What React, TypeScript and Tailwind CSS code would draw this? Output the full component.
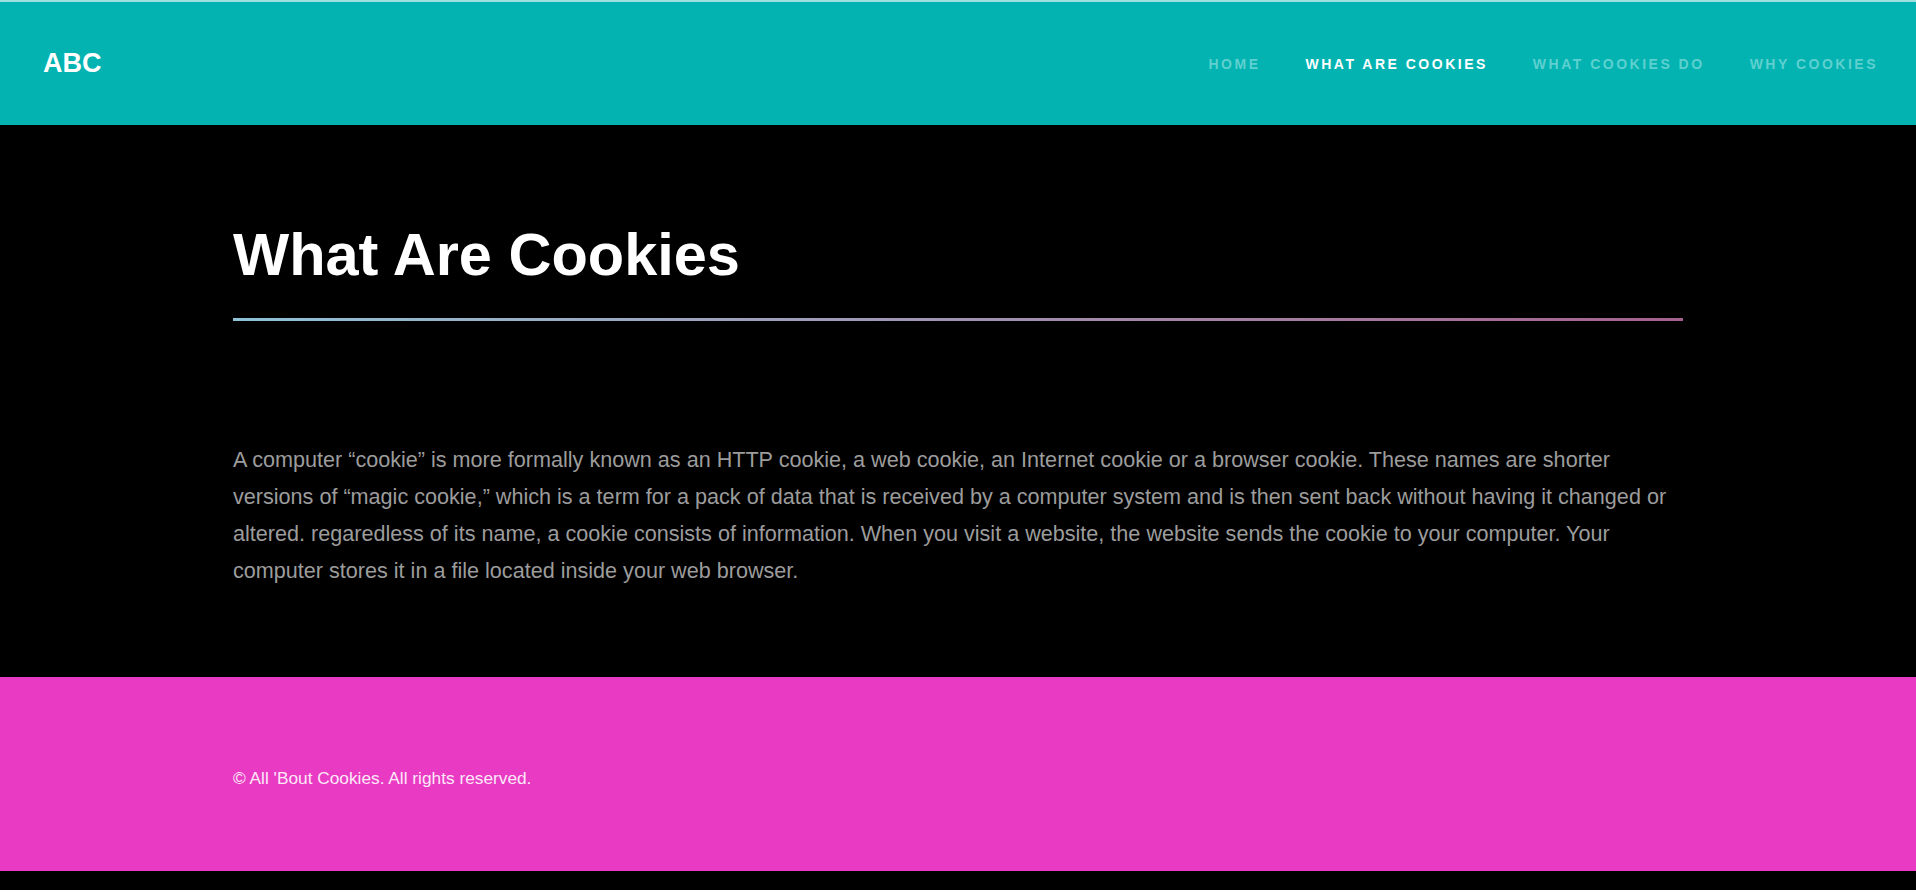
const NAV = [
  { label: 'Home', active: false },
  { label: 'What Are Cookies', active: true },
  { label: 'What Cookies Do', active: false },
  { label: 'Why Cookies', active: false },
];

export default function App() {
  return (
    <div className="font-['Liberation_Sans',Arial,sans-serif]">
      <div className="h-[2px] bg-[#9ee0e0]" />
      <header className="flex h-[123px] items-center justify-between bg-[#02b3b2] pl-[43px] pr-[38px]">
        <a className="text-[27px] font-bold leading-none text-white">ABC</a>
        <nav className="flex items-center gap-[45px]">
          {NAV.map((n) => (
            <a
              key={n.label}
              className={`text-[14px] font-bold uppercase leading-none tracking-[2.5px] ${
                n.active ? 'text-white' : 'text-[#5fd0cf]'
              }`}
            >
              {n.label}
            </a>
          ))}
        </nav>
      </header>

      <main className="bg-black pt-[100px] pb-[88px]">
        <div className="mx-auto w-[1450px]">
          <h1 className="text-[59.5px] font-bold leading-none text-white">What Are Cookies</h1>
          <div className="mt-[33px] h-[3px] bg-gradient-to-r from-[#8ec2d6] to-[#a5618e]" />
          <p className="mt-[120px] text-[21.6px] leading-[37px] text-[#9c9c9c]">
            A computer “cookie” is more formally known as an HTTP cookie, a web cookie, an Internet cookie or a
            browser cookie. These names are shorter versions of “magic cookie,” which is a term for a pack of data
            that is received by a computer system and is then sent back without having it changed or altered.
            regaredless of its name, a cookie consists of information. When you visit a website, the website sends
            the cookie to your computer. Your computer stores it in a file located inside your web browser.
          </p>
        </div>
      </main>

      <footer className="h-[194px] bg-[#e83ac3] pt-[89px]">
        <div className="mx-auto w-[1450px]">
          <p className="text-[17.3px] leading-[24px] text-[#fde8f8]">© All &apos;Bout Cookies. All rights reserved.</p>
        </div>
      </footer>
      <div className="h-[19px] bg-black" />
    </div>
  );
}
